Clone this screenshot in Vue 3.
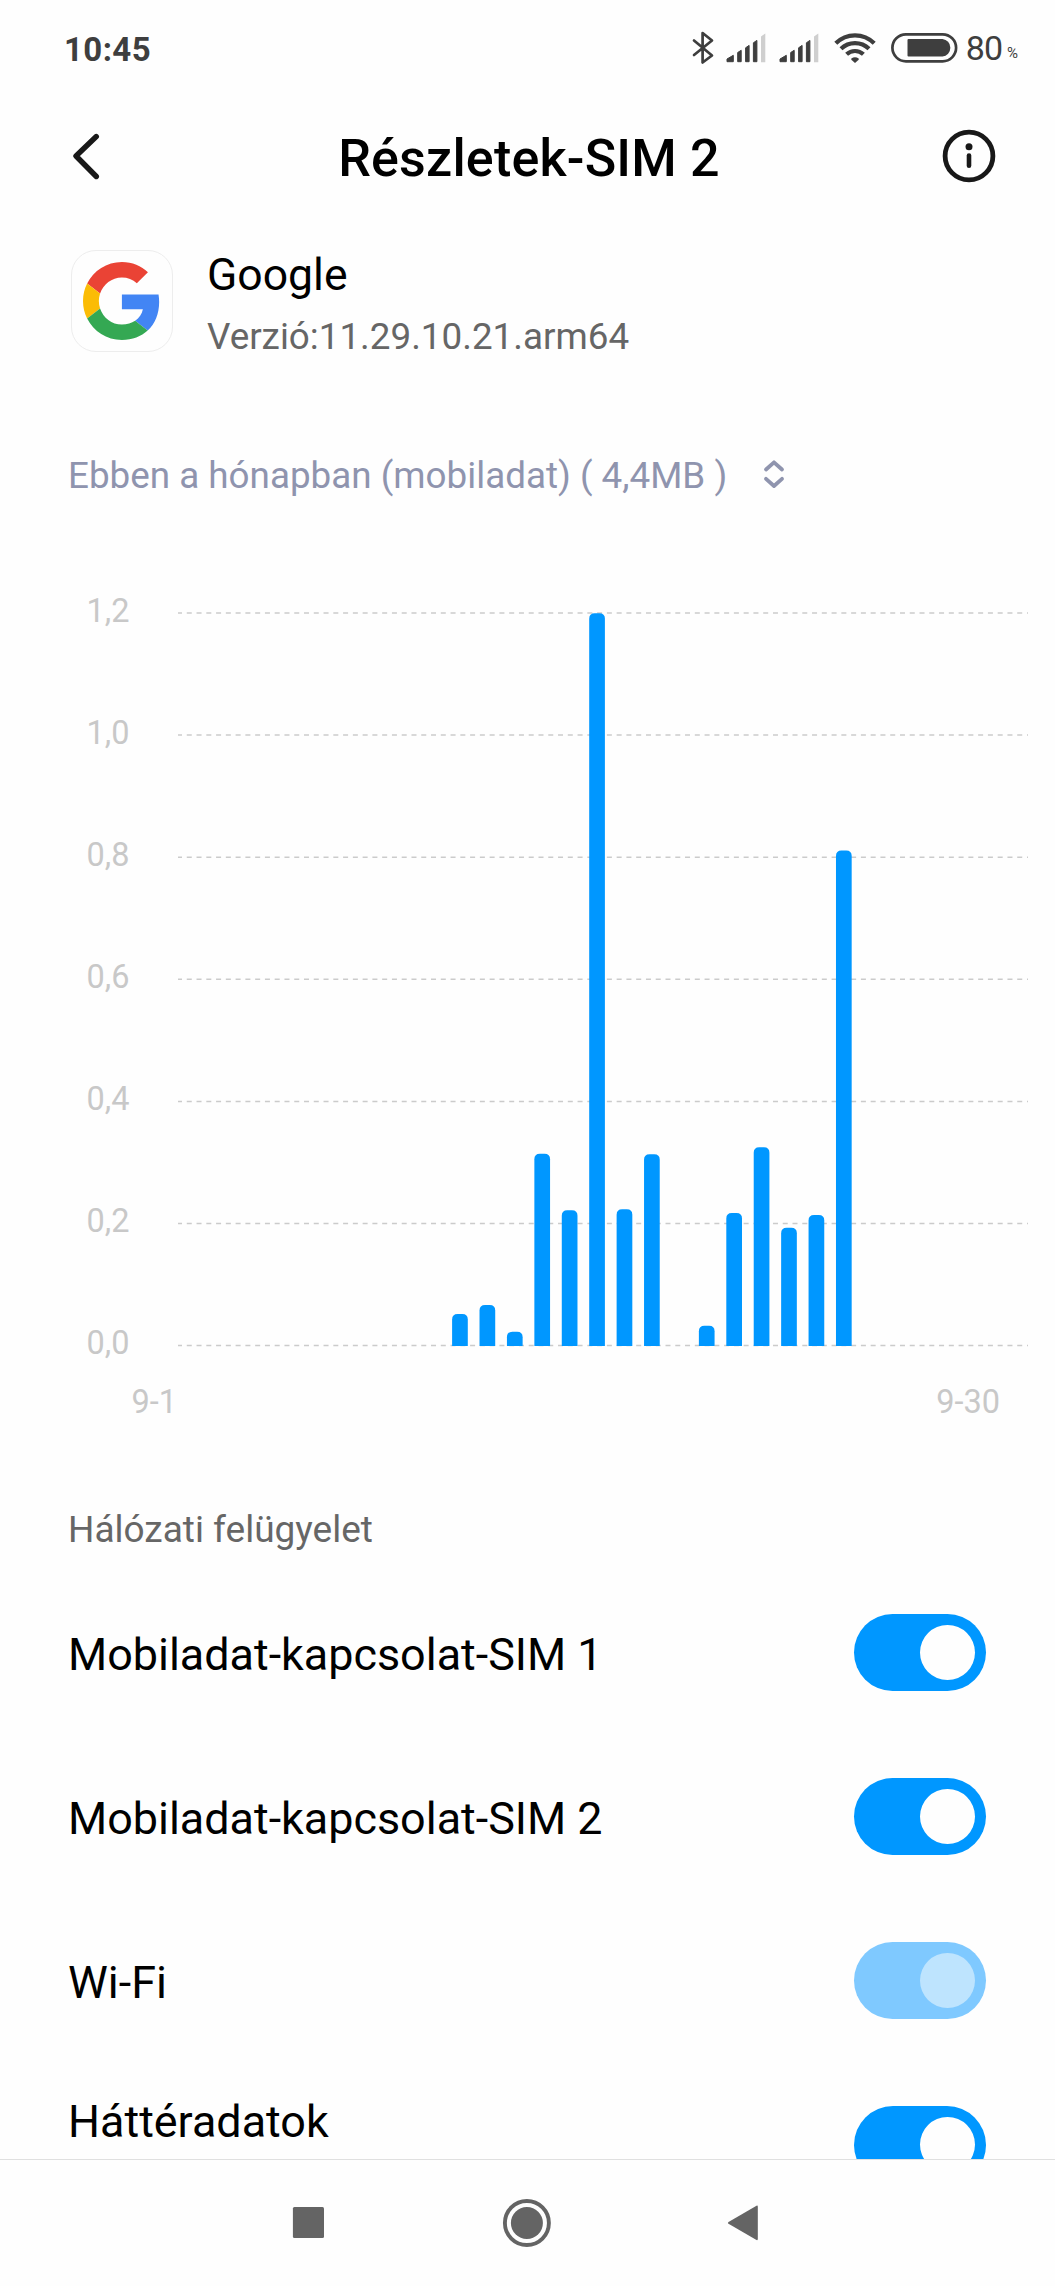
<script setup>
const ticks = ['1,2', '1,0', '0,8', '0,6', '0,4', '0,2', '0,0']
const tickGap = 122.1
const firstLine = 613

const bars = [
  { slot: 0, top: 1314 },
  { slot: 1, top: 1305 },
  { slot: 2, top: 1331.7 },
  { slot: 3, top: 1153.7 },
  { slot: 4, top: 1210.3 },
  { slot: 5, top: 613.3 },
  { slot: 6, top: 1209.3 },
  { slot: 7, top: 1154.2 },
  { slot: 9, top: 1325.7 },
  { slot: 10, top: 1213 },
  { slot: 11, top: 1147.3 },
  { slot: 12, top: 1227.8 },
  { slot: 13, top: 1215 },
  { slot: 14, top: 850.5 },
]
const base = 1346

function barPath({ slot, top }) {
  const x = 452.1 + slot * 27.42
  const w = 15.7
  const r = 5.5
  return `M${x} ${base}V${top + r}q0 ${-r} ${r} ${-r}h${w - 2 * r}q${r} 0 ${r} ${r}V${base}z`
}

const rows = [
  { label: 'Mobiladat-kapcsolat-SIM 1' },
  { label: 'Mobiladat-kapcsolat-SIM 2' },
  { label: 'Wi-Fi', disabled: true },
  { label: 'Háttéradatok', raised: true },
]
</script>

<template>
  <div class="screen">
    <div class="content">
      <div class="status">
        <span class="time">10:45</span>
        <div class="status-icons">
          <svg class="bt" width="22" height="34" viewBox="0 0 22 34">
            <path d="M2 9.5 20 24.5 10.6 31.5V2L20 9.5 2 24" fill="none" stroke="#3e3e3e" stroke-width="2.7" stroke-linejoin="round" stroke-linecap="round" />
          </svg>
          <svg v-for="n in 2" :key="n" class="signal" width="40" height="34" viewBox="0 0 40 34">
            <g fill="#3e3e3e" stroke="#3e3e3e" stroke-width="1" stroke-linejoin="round">
              <path d="M1 30.7V28L7.3 24.3V30.7z" />
              <path d="M11.7 30.7V21.5L15.2 19.3V30.7z" />
              <path d="M19.6 30.7V16.8L23.1 14.4V30.7z" />
              <path d="M27.4 30.7V11.8L30.9 9.4V30.7z" />
            </g>
            <path d="M35 31.2V5.5L39.3 2.4V31.2z" fill="#cfcfcf" />
          </svg>
          <svg class="wifi" width="42" height="34" viewBox="0 0 42 34">
            <g fill="none" stroke="#3e3e3e" stroke-width="4.2">
              <path d="M1.8 12.3a27 27 0 0 1 38.4 0" />
              <path d="M7 17.8a20 20 0 0 1 28 0" />
              <path d="M12.6 23.3a12.3 12.3 0 0 1 16.8 0" />
            </g>
            <path d="M17.3 27.6q3.7-2.6 7.4 0v1.2L21 31.9l-3.7-3.1z" fill="#3e3e3e" />
          </svg>
          <svg class="battery" width="67" height="34" viewBox="0 0 67 34">
            <rect x="1.4" y="3.3" width="63.7" height="27" rx="13.5" fill="none" stroke="#3e3e3e" stroke-width="2.7" />
            <path d="M17.5 8H51.5a8.8 8.8 0 0 1 0 17.5H17.5q-1 0-1-1V9q0-1 1-1z" fill="#3e3e3e" />
          </svg>
          <span class="level">80</span>
          <span class="percent">%</span>
        </div>
      </div>

      <div class="header">
        <svg class="back" width="30" height="50" viewBox="0 0 30 50">
          <path d="M26.3 5.5 6 25 26.3 45.5" fill="none" stroke="#181818" stroke-width="5.4" stroke-linecap="round" stroke-linejoin="round" />
        </svg>
        <h1>Részletek-SIM 2</h1>
        <svg class="info" width="54" height="54" viewBox="0 0 54 54">
          <circle cx="27" cy="27" r="23.9" fill="none" stroke="#181818" stroke-width="4.8" />
          <circle cx="27" cy="17.8" r="3.5" fill="#181818" />
          <path d="M27 26.5v10.3" stroke="#181818" stroke-width="4.6" stroke-linecap="round" />
        </svg>
      </div>

      <div class="app">
        <div class="app-icon">
          <svg width="77" height="78" viewBox="0 0 47.5 48" preserveAspectRatio="none">
            <path fill="#ea4335" d="M24 9.5c3.54 0 6.71 1.22 9.21 3.6l6.85-6.85C35.9 2.38 30.47 0 24 0 14.62 0 6.51 5.38 2.56 13.22l7.98 6.19C12.43 13.72 17.74 9.5 24 9.5z" />
            <path fill="#4285f4" d="M46.98 24.55c0-1.57-.15-3.09-.38-4.55H24v9.02h12.94c-.58 2.96-2.26 5.48-4.78 7.18l7.73 6c4.51-4.18 7.09-10.36 7.09-17.65z" />
            <path fill="#fbbc05" d="M10.53 28.59c-.48-1.45-.76-2.99-.76-4.59s.27-3.14.76-4.59l-7.98-6.19C.92 16.46 0 20.12 0 24c0 3.88.92 7.54 2.56 10.78l7.97-6.19z" />
            <path fill="#34a853" d="M24 48c6.48 0 11.93-2.13 15.89-5.81l-7.73-6c-2.15 1.45-4.92 2.3-8.16 2.3-6.26 0-11.57-4.22-13.47-9.91l-7.98 6.19C6.51 42.62 14.62 48 24 48z" />
          </svg>
        </div>
        <div class="app-text">
          <div class="app-name">Google</div>
          <div class="app-version">Verzió:11.29.10.21.arm64</div>
        </div>
      </div>

      <div class="period">
        <span>Ebben a hónapban (mobiladat) ( 4,4MB )</span>
        <svg width="22" height="30" viewBox="0 0 22 30">
          <path d="M3 10.5 11 3.3l8 7.2M3 19.8 11 27l8-7.2" fill="none" stroke="#8f94ae" stroke-width="3.8" stroke-linecap="round" stroke-linejoin="round" />
        </svg>
      </div>

      <svg class="chart" width="1055" height="960" viewBox="0 505 1055 960">
        <g v-for="(t, i) in ticks" :key="t">
          <path :d="`M178 ${firstLine + i * tickGap}H1028`" stroke="#cbcbcb" stroke-width="1.5" stroke-dasharray="5 4.77" stroke-dashoffset="1" />
          <text x="129.5" :y="firstLine + i * tickGap + 8.6" text-anchor="end">{{ t }}</text>
        </g>
        <path v-for="b in bars" :key="b.slot" :d="barPath(b)" fill="#0097ff" />
        <text x="131.5" y="1412.7">9-1</text>
        <text x="1000" y="1412.7" text-anchor="end">9-30</text>
      </svg>

      <div class="section">Hálózati felügyelet</div>

      <div v-for="r in rows" :key="r.label" class="row">
        <span class="label" :class="{ raised: r.raised }">{{ r.label }}</span>
        <div class="toggle" :class="{ disabled: r.disabled }"><div class="knob"></div></div>
      </div>
    </div>

    <div class="nav">
      <svg width="1055" height="126" viewBox="0 2160 1055 126">
        <g fill="#646464">
          <rect x="292.9" y="2207" width="31.1" height="31" rx="1.5" />
          <circle cx="526.9" cy="2223" r="16" />
          <path d="M728.5 2222 756.5 2205.7q1.3-.6 1.3 1V2239q0 1.6-1.3 1L728.5 2223.8q-1.3-.9 0-1.8z" />
        </g>
        <circle cx="526.9" cy="2223" r="22" fill="none" stroke="#646464" stroke-width="3.9" />
      </svg>
    </div>
  </div>
</template>

<style>
body {
  background: #fefefe;
}
</style>

<style scoped>
.screen {
  width: 1055px;
  height: 2286px;
  display: flex;
  flex-direction: column;
  overflow: hidden;
  background: #fefefe;
  font-family: Roboto, "Liberation Sans", sans-serif;
  color: #000;
}
.content {
  height: 2159px;
  flex: none;
  overflow: hidden;
  display: flex;
  flex-direction: column;
}
.content > * {
  flex: none;
}
.status {
  height: 100px;
  display: flex;
  justify-content: space-between;
  box-sizing: border-box;
  padding: 0 37px 0 64px;
  color: #3e3e3e;
}
.time {
  font-size: 33px;
  font-weight: 700;
  line-height: 99px;
  letter-spacing: 0.4px;
}
.status-icons {
  display: flex;
  align-items: center;
  height: 96px;
}
.signal {
  margin-left: 13px;
}
.bt + .signal {
  margin-left: 12px;
}
.wifi {
  margin-left: 15px;
}
.battery {
  margin-left: 15px;
}
.level {
  font-size: 34px;
  line-height: 97px;
  margin-left: 8px;
  letter-spacing: -1px;
}
.percent {
  font-size: 15px;
  line-height: 20px;
  margin: 10px 0 0 5px;
}
.header {
  height: 112px;
  display: flex;
  align-items: center;
  justify-content: space-between;
  box-sizing: border-box;
  padding: 0 59px 0 70px;
}
.back {
  margin-right: 16px;
}
h1 {
  margin: 6px 0 0;
  font-size: 52px;
  line-height: 60px;
  font-weight: 500;
  letter-spacing: 0.2px;
}
.app {
  display: flex;
  margin-top: 32px;
  padding-left: 71px;
}
.app-icon {
  width: 102px;
  height: 102px;
  margin-top: 6px;
  box-sizing: border-box;
  border: 1px solid #ededed;
  border-radius: 25px;
  display: flex;
  align-items: center;
  justify-content: center;
}
.app-icon svg {
  margin-right: 2px;
}
.app-text {
  margin-left: 34px;
}
.app-name {
  font-size: 44.5px;
  line-height: 62px;
}
.app-version {
  font-size: 36.8px;
  line-height: 61px;
  color: #666;
}
.period {
  display: flex;
  align-items: center;
  height: 60px;
  margin-top: 78px;
  padding-left: 68px;
  font-size: 36.8px;
  color: #8f94ae;
}
.period span {
  white-space: nowrap;
}
.period svg {
  margin-left: 36px;
  margin-top: -2px;
}
.chart {
  display: block;
}
.chart text {
  font-size: 32.5px;
  fill: #c8c8c8;
}
.section {
  margin-top: 35px;
  padding-left: 68px;
  font-size: 37px;
  line-height: 60px;
  color: #666;
}
.section + .row {
  margin-top: 10.5px;
}
.row {
  height: 164.1px;
  display: flex;
  align-items: center;
  justify-content: space-between;
  padding: 0 69px 0 68px;
}
.label {
  font-size: 44.9px;
  line-height: 60px;
  padding-top: 5px;
}
.label.raised {
  padding: 0 0 45px;
}
.toggle {
  width: 132px;
  height: 77.5px;
  border-radius: 39px;
  background: #0097ff;
  box-sizing: border-box;
  padding: 11px;
  display: flex;
  justify-content: flex-end;
}
.knob {
  width: 55px;
  height: 55px;
  border-radius: 50%;
  background: #fefefe;
}
.toggle.disabled {
  background: #7fc9ff;
}
.disabled .knob {
  background: #bee4fe;
}
.nav {
  height: 126px;
  border-top: 1px solid #e0e0e0;
}
.nav svg {
  display: block;
}
</style>
